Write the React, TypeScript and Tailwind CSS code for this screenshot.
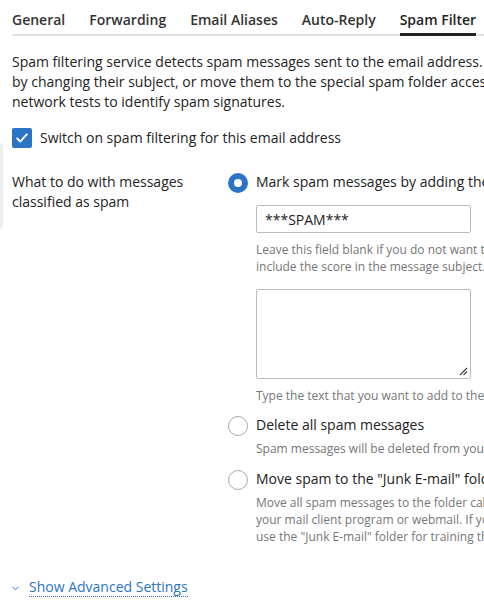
import React from "react";

const font = { fontFamily: '"Open Sans", "Noto Sans", sans-serif' };

function Radio({ checked }: { checked?: boolean }) {
  return checked ? (
    <span className="mt-[1px] flex h-[20px] w-[20px] shrink-0 items-center justify-center rounded-full bg-[#2b74c6]">
      <span className="h-[8px] w-[8px] rounded-full bg-white" />
    </span>
  ) : (
    <span className="mt-[1px] h-[20px] w-[20px] shrink-0 rounded-full border border-[#a9a9a9] bg-white" />
  );
}

export default function App() {
  return (
    <div className="relative h-[608px] w-[484px] overflow-hidden bg-white text-[#222]" style={font}>
      <div className="absolute left-0 top-[143px] h-[86px] w-[3px] rounded-r-[3px] bg-[#eeeeee]" />
      <div className="w-[800px] pl-[12px]">
        {/* Tabs */}
        <div className="flex h-[36px] items-stretch gap-[24px] border-b-2 border-[#e1e1e1] text-[14px] font-semibold text-[#333]">
          <div className="flex items-center pt-[4px]">General</div>
          <div className="flex items-center pt-[4px]">Forwarding</div>
          <div className="flex items-center pt-[4px]">Email Aliases</div>
          <div className="flex items-center pt-[4px]">Auto-Reply</div>
          <div className="-mb-[2px] flex items-center border-b-[3px] border-[#222] pt-[5px] text-[#222]">Spam Filter</div>
        </div>

        {/* Description */}
        <div className="mt-[16px] whitespace-nowrap text-[14px] leading-[20px]">
          <div>Spam filtering service detects spam messages sent to the email address. You can choose to mark spam messages</div>
          <div>by changing their subject, or move them to the special spam folder accessible via webmail. SpamAssassin uses</div>
          <div>network tests to identify spam signatures.</div>
        </div>

        {/* Checkbox */}
        <label className="mt-[15px] flex items-center gap-[8px] text-[14px]">
          <span className="flex h-[20px] w-[20px] items-center justify-center rounded-[2px] bg-[#2b74c6]">
            <svg width="14" height="14" viewBox="0 0 14 14" fill="none">
              <path d="M2.2 7.4 L5.4 10.4 L11.8 3.4" stroke="white" strokeWidth="2" strokeLinecap="round" strokeLinejoin="round" />
            </svg>
          </span>
          <span className="whitespace-nowrap">Switch on spam filtering for this email address</span>
        </label>

        {/* Form row */}
        <div className="mt-[24px] flex">
          <div className="w-[216px] shrink-0 text-[14px] leading-[20px]">
            What to do with messages
            <br />
            classified as spam
          </div>
          <div className="flex flex-col">
            {/* Option 1 */}
            <div className="flex items-start gap-[8px]">
              <Radio checked />
              <div className="whitespace-nowrap text-[14px] leading-[20px]">
                Mark spam messages by adding the following text to the subject:
              </div>
            </div>
            <div className="ml-[28px]">
              <div className="mt-[12px] flex h-[28px] w-[215px] items-center rounded-[2px] border border-[#bcbcbc] px-[8px] text-[14px]">
                ***SPAM***
              </div>
              <div className="mt-[8px] whitespace-nowrap text-[12px] leading-[17px] text-[#767676]">
                <div>Leave this field blank if you do not want to add any text. Use _SCORE_ to</div>
                <div>include the score in the message subject.</div>
              </div>
              <div className="relative mt-[14px] h-[90px] w-[215px] rounded-[2px] border border-[#bcbcbc]">
                <svg className="absolute bottom-[2px] right-[2px]" width="9" height="9" viewBox="0 0 9 9">
                  <path d="M8 1 L1 8 M8 4.5 L4.5 8" stroke="#444" strokeWidth="1.2" />
                </svg>
              </div>
              <div className="mt-[8px] whitespace-nowrap text-[12px] leading-[17px] text-[#767676]">
                Type the text that you want to add to the subject of spam messages.
              </div>
            </div>

            {/* Option 2 */}
            <div className="mt-[11px] flex items-start gap-[8px]">
              <Radio />
              <div className="whitespace-nowrap text-[14px] leading-[20px]">Delete all spam messages</div>
            </div>
            <div className="ml-[28px] mt-[4px] whitespace-nowrap text-[12px] leading-[17px] text-[#767676]">
              Spam messages will be deleted from your mailbox without notification.
            </div>

            {/* Option 3 */}
            <div className="mt-[12px] flex items-start gap-[8px]">
              <Radio />
              <div className="whitespace-nowrap text-[14px] leading-[20px]">Move spam to the "Junk E-mail" folder</div>
            </div>
            <div className="ml-[28px] mt-[4px] whitespace-nowrap text-[12px] leading-[17px] text-[#767676]">
              <div>Move all spam messages to the folder called "Junk E-mail". You can access it from</div>
              <div>your mail client program or webmail. If you use the IMAP protocol, you can also</div>
              <div>use the "Junk E-mail" folder for training the spam filter.</div>
            </div>
          </div>
        </div>

        {/* Advanced */}
        <div className="mt-[32px] flex items-center gap-[10px] text-[14px] text-[#2b74c6]">
          <svg width="7" height="5" viewBox="0 0 7 5" className="mt-[2px]">
            <path d="M0.5 0.8 L3.5 3.8 L6.5 0.8" stroke="#2b74c6" strokeWidth="1" fill="none" />
          </svg>
          <span className="border-b border-dotted border-[#2b74c6] leading-[19px]">Show Advanced Settings</span>
        </div>
      </div>
    </div>
  );
}
